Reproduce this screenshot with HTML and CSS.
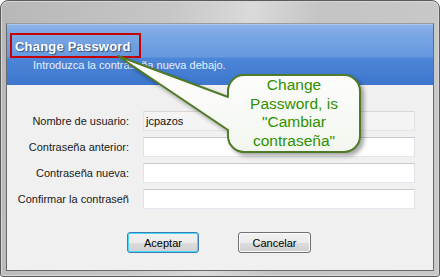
FILE: index.html
```html
<!DOCTYPE html>
<html lang="es">
<head>
<meta charset="utf-8">
<title>Change Password</title>
<link rel="stylesheet" href="styles.css">
</head>
<body>
<div class="window">
  <div class="client">
    <div class="header">
      <div class="title-box"><span class="title">Change Password</span></div>
      <div class="subtitle">Introduzca la contraseña nueva debajo.</div>
    </div>
    <div class="body">
      <div class="form">
        <span class="lbl">Nombre de usuario:</span><div class="field disabled">jcpazos</div>
        <span class="lbl">Contraseña anterior:</span><div class="field"></div>
        <span class="lbl">Contraseña nueva:</span><div class="field"></div>
        <span class="lbl">Confirmar la contraseñ</span><div class="field"></div>
      </div>
      <div class="buttons">
        <button class="btn default">Aceptar</button>
        <button class="btn">Cancelar</button>
      </div>
    </div>
  </div>
  <svg class="callout-shape" width="440" height="277" viewBox="0 0 440 277">
    <defs>
      <linearGradient id="cg" x1="0" y1="0" x2="0" y2="1">
        <stop offset="0" stop-color="#ffffff"/>
        <stop offset="1" stop-color="#f3f6ef"/>
      </linearGradient>
    </defs>
    <path d="M244 75 H344 A16 16 0 0 1 360 91 V136 A16 16 0 0 1 344 152 H244 A16 16 0 0 1 228 136 V130 L118 56 L228 97 V91 A16 16 0 0 1 244 75 Z" fill="url(#cg)" stroke="#4f7a26" stroke-width="2" stroke-linejoin="round"/>
  </svg>
  <div class="callout-text">Change<br>Password, is<br>"Cambiar<br>contraseña"</div>
</div>
</body>
</html>
```
FILE: styles.css
```css
* { box-sizing: border-box; }
html, body { margin: 0; padding: 0; }
body {
  width: 440px;
  height: 277px;
  overflow: hidden;
  background: #ffffff;
  font-family: "Liberation Sans", Arial, sans-serif;
}
.window {
  position: relative;
  width: 440px;
  height: 277px;
  border: 1px solid #5a5a5a;
  border-radius: 8px 8px 3px 3px;
  background: linear-gradient(100deg, #b7b7b7 0%, #c6c6c6 35%, #dadada 52%, #c4c4c4 66%, #c9c9c9 100%);
  padding: 22px 5px 5px 5px;
  box-shadow: inset 0 0 0 1px #d8d8d8;
}
.client {
  height: 100%;
  display: flex;
  flex-direction: column;
  border: 1px solid #6a6a6a;
  border-top-color: #9c9c9c;
  background: #f0f0f0;
}
.header {
  height: 61px;
  padding: 8px 0 0 3px;
  background: linear-gradient(to bottom, #8db3e9 0, #7aa6e3 10px, #6698de 32px, #4d86d7 33px, #467fd3 45px, #3c77ce 61px);
  border-top: 1px solid #a9c6ef;
}
.title-box {
  width: 131px;
  height: 25px;
  border: 2px solid #c40000;
  padding-left: 3px;
  line-height: 21px;
}
.title {
  font-size: 13px;
  font-weight: bold;
  color: #ffffff;
  letter-spacing: 0.2px;
  text-shadow: 1px 1px 1px rgba(40, 60, 100, 0.8);
}
.subtitle {
  margin-top: 1px;
  padding-left: 23px;
  font-size: 11px;
  line-height: 13px;
  color: #e6efff;
}
.body {
  flex: 1;
  padding-top: 26px;
}
.form {
  display: grid;
  grid-template-columns: 114px 272px;
  grid-auto-rows: 20px;
  column-gap: 14px;
  row-gap: 6px;
  padding-left: 8px;
}
.lbl {
  font-size: 11px;
  color: #1a1a1a;
  text-align: right;
  white-space: nowrap;
  overflow: hidden;
  line-height: 20px;
}
.field {
  background: #ffffff;
  border: 1px solid;
  border-color: #c6c9cf #e0e2e7 #e4e8ee #e0e2e7;
  border-radius: 1px;
  font-size: 11px;
  color: #111;
  line-height: 18px;
  padding-left: 2px;
}
.field.disabled {
  background: #f4f4f4;
  border-color: #d8d8d8 #e2e2e2 #e6e6e6 #e2e2e2;
}
.buttons {
  display: flex;
  gap: 39px;
  margin-top: 23px;
  padding-left: 120px;
}
.btn {
  width: 72px;
  height: 21px;
  padding: 0;
  font-family: "Liberation Sans", Arial, sans-serif;
  font-size: 11px;
  color: #000;
  border: 1px solid #707070;
  border-radius: 3px;
  background: linear-gradient(to bottom, #f2f2f2 0, #ebebeb 50%, #dddddd 51%, #cfcfcf 100%);
  box-shadow: inset 0 0 0 1px #fbfbfb;
}
.btn + .btn { width: 73px; }
.btn.default {
  border-color: #3c7fb1;
  box-shadow: inset 0 0 0 1px #48d8fb;
}
.callout-shape {
  position: absolute;
  left: -1px;
  top: -1px;
  pointer-events: none;
  filter: drop-shadow(3px 3px 2px rgba(0, 0, 0, 0.35));
}
.callout-text {
  position: absolute;
  left: 227px;
  top: 75px;
  width: 132px;
  text-align: center;
  font-size: 15.5px;
  line-height: 18.5px;
  color: #2f9000;
}
```
